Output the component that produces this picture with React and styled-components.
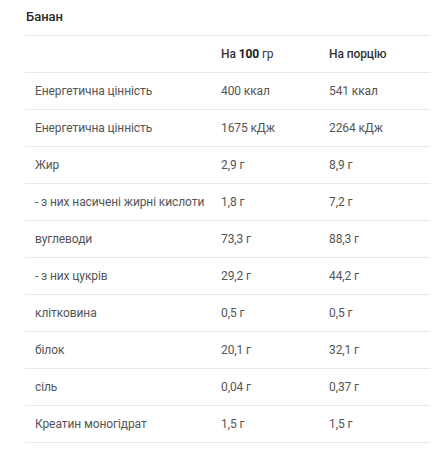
import React from 'react';
import styled, { createGlobalStyle } from 'styled-components';

const GlobalStyle = createGlobalStyle`
  html, body {
    margin: 0;
    padding: 0;
    background: #fff;
    font-family: Roboto, "Noto Sans", "Liberation Sans", sans-serif;
  }
`;

const Wrapper = styled.div`
  width: 432px;
  padding: 0 2px 0 25px;
  box-sizing: border-box;
`;

const Title = styled.div`
  height: 35px;
  padding-left: 1px;
  padding-top: 9px;
  box-sizing: border-box;
  font-size: 13px;
  font-weight: 500;
  color: #2a2a2a;
`;

const Table = styled.div`
  border-top: 1px solid #e8e8e8;
`;

const Row = styled.div`
  display: grid;
  grid-template-columns: 186px 108px 1fr;
  height: 36px;
  align-items: center;
  border-bottom: 1px solid #e8e8e8;
  font-size: 12px;
  letter-spacing: -0.1px;
  color: ${(p) => (p.$head ? '#333' : '#555')};
  font-weight: ${(p) => (p.$head ? 500 : 400)};
`;

const Cell = styled.div`
  padding-left: 10px;
  white-space: nowrap;
`;

const Strong = styled.b`
  font-weight: 700;
  color: #222;
`;

const Light = styled.span`
  font-weight: 400;
`;

const rows = [
  ['Енергетична цінність', '400 ккал', '541 ккал'],
  ['Енергетична цінність', '1675 кДж', '2264 кДж'],
  ['Жир', '2,9 г', '8,9 г'],
  ['- з них насичені жирні кислоти', '1,8 г', '7,2 г'],
  ['вуглеводи', '73,3 г', '88,3 г'],
  ['- з них цукрів', '29,2 г', '44,2 г'],
  ['клітковина', '0,5 г', '0,5 г'],
  ['білок', '20,1 г', '32,1 г'],
  ['сіль', '0,04 г', '0,37 г'],
  ['Креатин моногідрат', '1,5 г', '1,5 г'],
];

export default function App() {
  return (
    <>
      <GlobalStyle />
      <Wrapper>
        <Title>Банан</Title>
        <Table>
          <Row $head>
            <Cell />
            <Cell>
              На <Strong>100</Strong> <Light>гр</Light>
            </Cell>
            <Cell>На порцію</Cell>
          </Row>
          {rows.map((r, i) => (
            <Row key={i}>
              <Cell>{r[0]}</Cell>
              <Cell>{r[1]}</Cell>
              <Cell>{r[2]}</Cell>
            </Row>
          ))}
        </Table>
      </Wrapper>
    </>
  );
}
